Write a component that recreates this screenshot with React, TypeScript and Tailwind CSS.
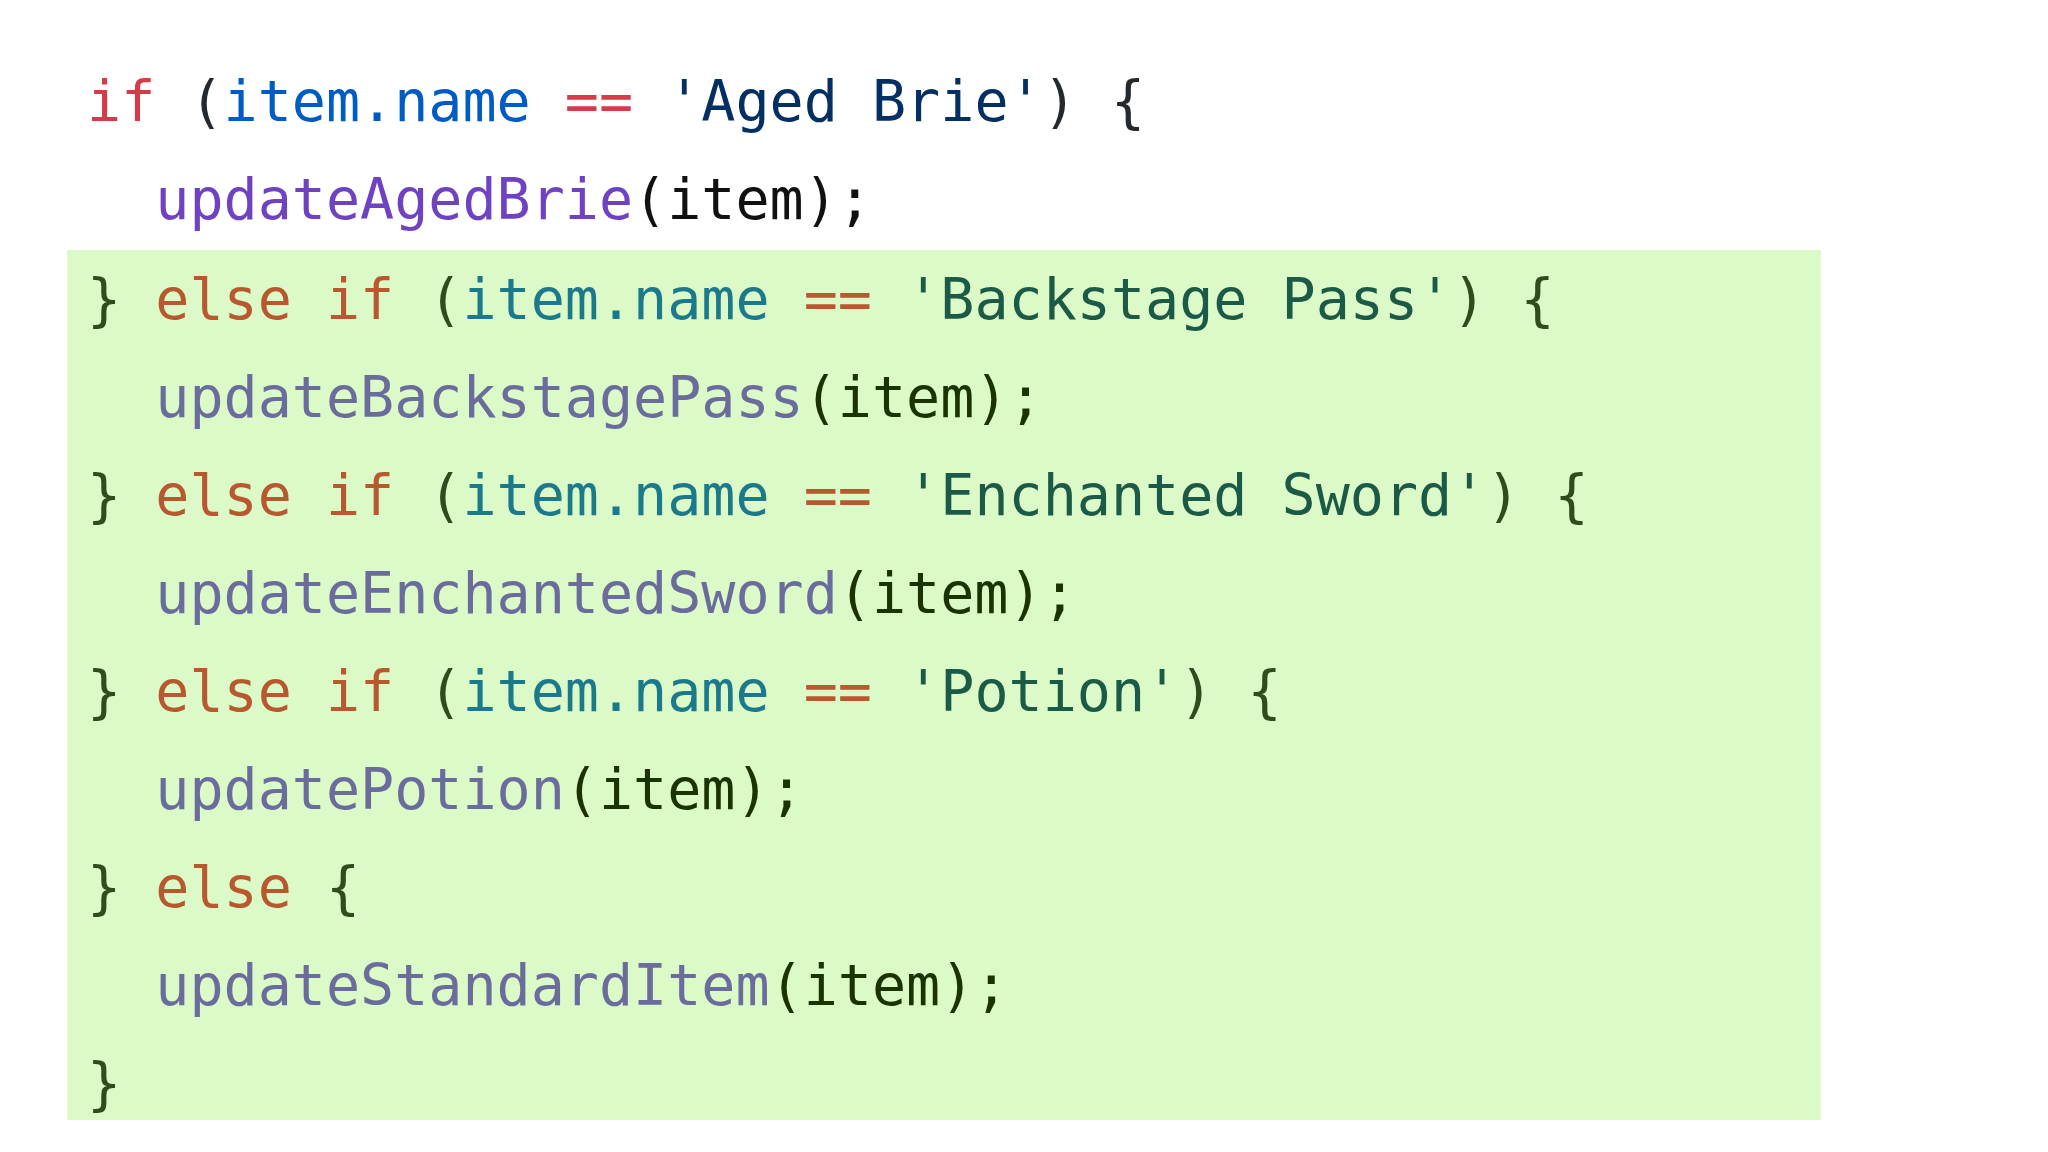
const Line = ({ children }: any) => (
  <div className="h-[98px] leading-[98px] whitespace-pre">{children}</div>
);

const App = () => {
  const branches = [
    { name: 'Backstage Pass', fn: 'updateBackstagePass' },
    { name: 'Enchanted Sword', fn: 'updateEnchantedSword' },
    { name: 'Potion', fn: 'updatePotion' },
  ];

  return (
    <div className="w-full h-screen bg-white pt-[52px] font-['DejaVu_Sans_Mono',monospace] text-[56.7px] overflow-hidden">
      <div className="pl-[87px]">
        <Line>
          <span className="text-[#d73a49]">if</span>
          <span className="text-[#24292e]"> (</span>
          <span className="text-[#005cc5]">item.name</span>
          <span className="text-[#d73a49]"> == </span>
          <span className="text-[#032f62]">'Aged Brie'</span>
          <span className="text-[#24292e]">) {'{'}</span>
        </Line>
        <Line>
          <span>  </span>
          <span className="text-[#6f42c1]">updateAgedBrie</span>
          <span className="text-[#111111]">(item);</span>
        </Line>
      </div>
      <div className="ml-[67px] w-[1754px] h-[870px] bg-[#dcf9c8] pl-[20px] mt-[2px]">
        {branches.map((b, i) => (
          <div key={i}>
            <Line>
              <span className="text-[#2e4d1e]">{'} '}</span>
              <span className="text-[#b8582f]">else if</span>
              <span className="text-[#2e4d1e]"> (</span>
              <span className="text-[#1a7a8c]">item.name</span>
              <span className="text-[#b8582f]"> == </span>
              <span className="text-[#1b5a46]">'{b.name}'</span>
              <span className="text-[#2e4d1e]">) {'{'}</span>
            </Line>
            <Line>
              <span>  </span>
              <span className="text-[#6a6c9c]">{b.fn}</span>
              <span className="text-[#1a3300]">(item);</span>
            </Line>
          </div>
        ))}
        <Line>
          <span className="text-[#2e4d1e]">{'} '}</span>
          <span className="text-[#b8582f]">else</span>
          <span className="text-[#2e4d1e]"> {'{'}</span>
        </Line>
        <Line>
          <span>  </span>
          <span className="text-[#6a6c9c]">updateStandardItem</span>
          <span className="text-[#1a3300]">(item);</span>
        </Line>
        <Line>
          <span className="text-[#2e4d1e]">{'}'}</span>
        </Line>
      </div>
    </div>
  );
};

export default App;
